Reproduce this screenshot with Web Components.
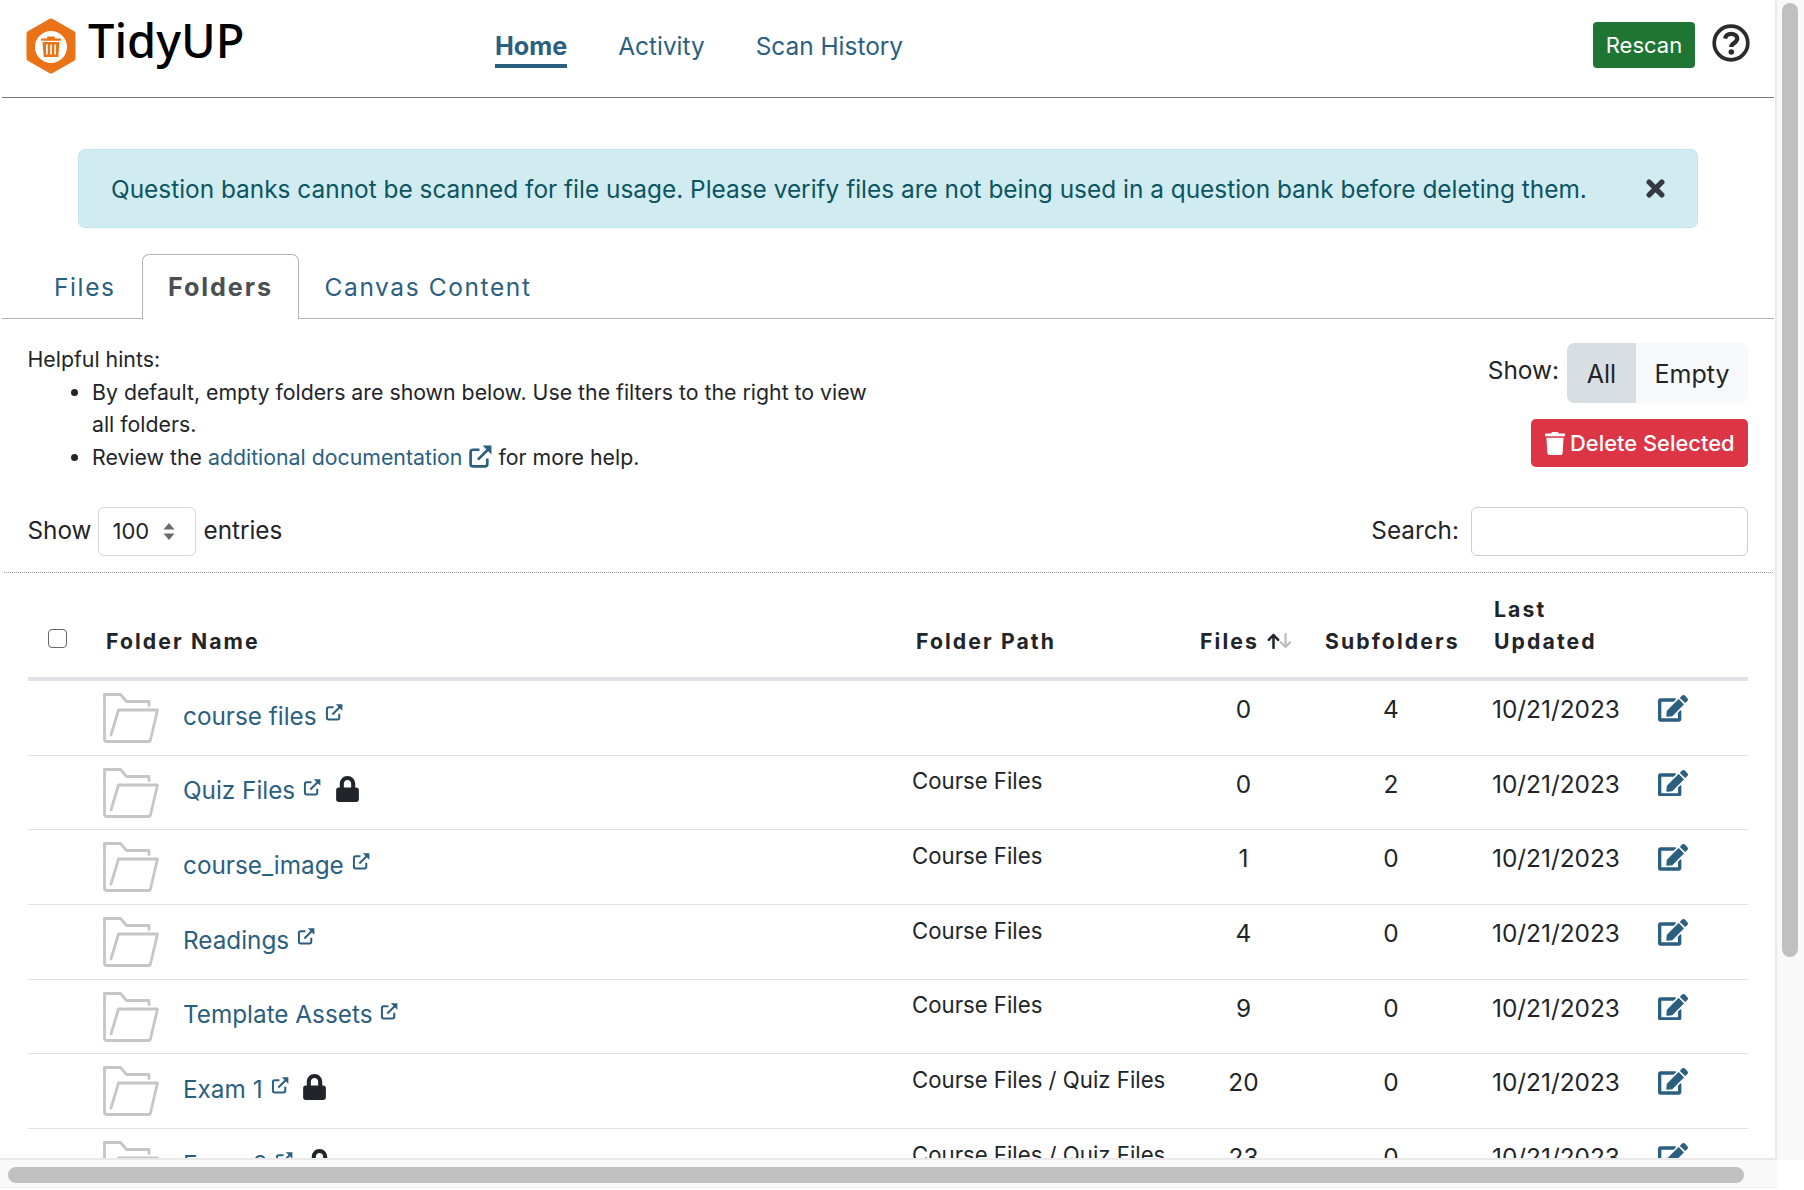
<!DOCTYPE html>
<html lang="en"><head><meta charset="utf-8"><title>TidyUP</title>
<style>
html,body{margin:0;padding:0;background:#fff;overflow:hidden;width:1804px;height:1190px}
body{font-family:Inter,"Liberation Sans",sans-serif;color:#212529}
</style></head><body>
<tu-app>
  <tu-navbar></tu-navbar>
  <tu-alert>Question banks cannot be scanned for file usage. Please verify files are not being used in a question bank before deleting them.</tu-alert>
  <tu-tabs></tu-tabs>
  <tu-toolbar></tu-toolbar>
  <tu-controls></tu-controls>
  <tu-thead></tu-thead>
  <tu-row files="0" subs="4">course files</tu-row>
  <tu-row path="Course Files" files="0" subs="2" locked>Quiz Files</tu-row>
  <tu-row path="Course Files" files="1" subs="0">course_image</tu-row>
  <tu-row path="Course Files" files="4" subs="0">Readings</tu-row>
  <tu-row path="Course Files" files="9" subs="0">Template Assets</tu-row>
  <tu-row path="Course Files / Quiz Files" files="20" subs="0" locked>Exam 1</tu-row>
  <tu-row path="Course Files / Quiz Files" files="23" subs="0" locked>Exam 2</tu-row>
</tu-app>
<script>
const ICONS={
 ext:'<svg viewBox="0 0 24 24" width="100%" height="100%" fill="none" stroke="currentColor" stroke-width="2.6"><path d="M18.500 14v5.200a2.300 2.300 0 0 1-2.300 2.300H4.800a2.300 2.300 0 0 1-2.300-2.300V7.800a2.300 2.300 0 0 1 2.300-2.300H11"/><path d="M9.500 15 L20 4.500"/><path d="M14 1.500h8.500v8.500z" fill="currentColor" stroke="none"/></svg>',
 edit:'<svg viewBox="0 0 576 512" width="100%" height="100%" fill="currentColor"><path d="M402.600 83.200l90.200 90.200c3.800 3.800 3.800 10 0 13.800L274.400 405.600l-92.800 10.300c-12.400 1.400-22.900-9.100-21.500-21.500l10.300-92.800L388.800 83.200c3.800-3.800 10-3.800 13.800 0zm162-22.900l-48.800-48.800c-15.200-15.200-39.900-15.200-55.200 0l-35.400 35.400c-3.800 3.800-3.800 10 0 13.800l90.200 90.200c3.800 3.800 10 3.800 13.800 0l35.400-35.400c15.200-15.300 15.200-40 0-55.200zM384 346.200V448H64V128h229.800c3.200 0 6.200-1.300 8.500-3.500l40-40c7.600-7.600 2.200-20.500-8.500-20.500H48C21.500 64 0 85.500 0 112v352c0 26.500 21.500 48 48 48h352c26.500 0 48-21.500 48-48V306.200c0-10.700-12.900-16-20.500-8.500l-40 40c-2.200 2.300-3.500 5.300-3.500 8.500z"/></svg>',
 lock:'<svg viewBox="0 0 448 512" width="100%" height="100%" fill="currentColor"><path d="M400 224h-24v-72C376 68.200 307.800 0 224 0S72 68.200 72 152v72H48c-26.500 0-48 21.500-48 48v192c0 26.500 21.500 48 48 48h352c26.500 0 48-21.500 48-48V272c0-26.500-21.500-48-48-48zm-104 0H152v-72c0-39.700 32.300-72 72-72s72 32.300 72 72v72z"/></svg>',
 trash:'<svg viewBox="0 0 448 512" width="100%" height="100%" fill="currentColor"><path d="M432 32H312l-9.400-18.700A24 24 0 0 0 281.100 0H166.800a23.720 23.720 0 0 0-21.400 13.300L136 32H16A16 16 0 0 0 0 48v32a16 16 0 0 0 16 16h416a16 16 0 0 0 16-16V48a16 16 0 0 0-16-16zM53.200 467a48 48 0 0 0 47.900 45h245.800a48 48 0 0 0 47.900-45L416 128H32z"/></svg>',
 folder:'<svg viewBox="0 0 56 50" width="56" height="50" fill="none" stroke="#c6c6c6" stroke-width="2.800" stroke-linejoin="round" stroke-linecap="round"><path d="M46 12.500V8.500H23.500L17.500 1.500H1.500V46a2.500 2.500 0 0 0 2.500 2.500H45.500a2 2 0 0 0 2-1.700L54.500 17H15.500L8 42"/></svg>',
 help:'<svg viewBox="0 0 38 38" width="38" height="38" fill="none" stroke="#2b2b2b"><circle cx="19" cy="19" r="16.800" stroke-width="3.700"/><path d="M13 14.600c.6-3.200 3-4.800 6.200-4.800 3.400 0 6 2 6 4.800 0 2.200-1.300 3.300-3.100 4.500-1.900 1.200-2.800 2-2.800 3.900" stroke-width="4.300"/><circle cx="19.300" cy="28" r="2.800" fill="#2b2b2b" stroke="none"/></svg>',
 sort:'<svg viewBox="0 0 25 16" width="25" height="16" fill="none" stroke-linecap="round" stroke-linejoin="round"><path d="M6.500 15V2M1.800 6.800L6.500 2l4.700 4.800" stroke="#212529" stroke-width="2.500"/><path d="M18.500 1v13M13.800 9.200l4.700 4.800 4.700-4.800" stroke="#bdbdbd" stroke-width="2.200"/></svg>',
 logo:'<svg viewBox="0 0 50 56" width="50" height="56"><path d="M25 3 L47 15.500 V40.500 L25 53 L3 40.500 V15.500 Z" fill="#ea7317" stroke="#ea7317" stroke-width="5" stroke-linejoin="round"/><circle cx="25" cy="29" r="16" fill="#fff"/><g fill="#ea7317"><rect x="15" y="20.500" width="20" height="2.200" rx=".8"/><rect x="21" y="18.500" width="8" height="2.500" rx="1"/><path d="M16.500 24h17l-1.200 15H17.700zM20 26.500v10h1.700v-10zm4.200 0v10h1.700v-10zm4.100 0v10H30v-10z" fill-rule="evenodd"/></g></svg>'
};
function def(name,css,html){
  customElements.define(name,class extends HTMLElement{
    constructor(){super();this.attachShadow({mode:'open'});}
    connectedCallback(){
      this.shadowRoot.innerHTML='<style>svg{display:block}'+css+'</style>'+(typeof html==='function'?html(this):html);
    }
  });
}
def('tu-app',`
:host{display:grid;grid-template-columns:1777px 27px;grid-template-rows:1160px 28px 2px;width:1804px;height:1190px}
.view{overflow:hidden;border-right:2px solid #e9e9e9;border-bottom:2px solid #e9e9e9;box-sizing:border-box;padding-left:1px;min-width:0}
.vbar{background:#f9f9f9;padding:3px 6px 0 5px}
.vbar i{display:block;height:954px;background:#c0c0c0;border-radius:8px}
.hbar{grid-column:1 / 2;background:#f9f9f9;padding:7px 0 0 8px;border-bottom:1px solid #eee;box-sizing:border-box}
.hbar i{display:block;width:1736px;height:16px;background:#c0c0c0;border-radius:8px}
`,`<div class="view"><slot></slot></div><div class="vbar"><i></i></div><div class="hbar"><i></i></div>`);
def('tu-navbar',`
:host{display:flex;align-items:flex-start;height:97px;border-bottom:1px solid #777;width:1772px;margin-left:1px}
.brand{display:flex;margin:18px 0 0 24px;width:469px;flex:none}
.name{font:500 47px/1 "Noto Sans",sans-serif;color:#000;margin:-1px 0 0 12px}
nav{display:flex;gap:51px;margin-top:28px;flex:1}
a{font-size:24.400px;line-height:36px;color:#2b5f80;text-decoration:none;display:block;height:40px;box-sizing:border-box}
a.on{font-size:25.200px;font-weight:700;border-bottom:4px solid #2b5f80}
.btn{background:#1e7534;color:#fff;width:102px;height:46px;border-radius:4px;font-size:22px;line-height:46px;text-align:center;margin-top:22px;flex:none}
.help{margin:24px 24px 0 17px;flex:none;height:38px}
`,`<div class="brand">${ICONS.logo}<div class="name">TidyUP</div></div>
<nav><a class="on">Home</a><a>Activity</a><a>Scan History</a></nav>
<div class="btn">Rescan</div><div class="help">${ICONS.help}</div>`);
def('tu-alert',`
:host{display:flex;align-items:center;justify-content:space-between;box-sizing:border-box;margin:51px 0 0 77px;width:1620px;height:79px;background:#d1ecf1;border:1px solid #bee5eb;border-radius:7px;color:#0c5460;font-size:24.400px;padding:0 32px 0 32px}
svg{width:19px;height:19px}
`,`<slot></slot><svg viewBox="0 0 18 18" stroke="#343a40" stroke-width="5" stroke-linecap="round"><path d="M3 3l12 12M15 3L3 15"/></svg>`);
def('tu-tabs',`
:host{display:flex;box-sizing:border-box;width:1772px;margin-left:1px;height:65px;margin-top:26px;border-bottom:1px solid #b4b4b4;padding-left:26px;font-size:24.500px;letter-spacing:1.600px;color:#2b5f80}
span{display:block;padding:16px 26px 0;height:64px;box-sizing:border-box;line-height:34px}
.on{font-size:25.200px;letter-spacing:1.900px;font-weight:700;color:#4a4f54;border:1px solid #b4b4b4;border-bottom:0;background:#fff;height:65px;border-radius:7px 7px 0 0;padding:15px 0 0 25.500px;width:157px}
`,`<span>Files</span><span class="on">Folders</span><span>Canvas Content</span>`);
def('tu-toolbar',`
:host{display:flex;justify-content:space-between;width:1747px;box-sizing:border-box;padding:24px 0 0 26.500px;font-size:21.300px;line-height:32.500px}
.hints{width:850px}
ul{margin:0;padding:0 0 0 64.500px}
a{color:#2b5f80;text-decoration:none}
.e{display:inline-block;width:25px;height:25px;color:#2b5f80;vertical-align:-4px;margin:0 5px 0 6px}
.r{display:flex;flex-direction:column;align-items:flex-end}
.f{display:flex;align-items:flex-start;height:60px;margin-bottom:16px;font-size:25px}
.l{line-height:54px;margin-right:8px;font-size:24.400px}
.g{display:flex;height:60px;line-height:62px;border-radius:7px;overflow:hidden;font-size:25px}
.g b{font-weight:400;display:block;text-align:center}
.a{width:69px;background:#d9dee3}.m{width:112px;background:#f8f9fa}
.d{display:flex;align-items:center;width:217px;height:48px;box-sizing:border-box;padding-left:14px;background:#dc3545;color:#fff;border-radius:5px;font-size:21.900px;font-weight:500;line-height:48px}
.d span{display:block;width:20px;height:23px;margin-right:5px}
`,`<div class="hints">Helpful hints:<ul><li>By default, empty folders are shown below. Use the filters to the right to view all folders.</li><li>Review the <a>additional documentation</a><span class="e">${ICONS.ext}</span>for more help.</li></ul></div>
<div class="r"><div class="f"><span class="l">Show:</span><div class="g"><b class="a">All</b><b class="m">Empty</b></div></div>
<div class="d"><span>${ICONS.trash}</span>Delete Selected</div></div>`);
def('tu-controls',`
:host{display:block;width:1773px;box-sizing:border-box;margin-top:34px}
.row{display:flex;justify-content:space-between;padding:0 26px 0 26.500px;height:49px;font-size:24.300px;line-height:47px}
.s,.q{display:flex}
.sel{display:flex;align-items:center;box-sizing:border-box;width:98px;height:49px;margin:0 7px;border:1px solid #d6d6d6;border-radius:6px;padding-left:13px;font-size:22px}
.sel svg{margin-left:14px}
.in{box-sizing:border-box;width:277px;height:49px;border:1px solid #cfcfcf;border-radius:6px;margin-left:12px}
.dot{border-top:1px dotted #9a9a9a;margin:16px 1px 0 3px}
`,`<div class="row"><div class="s">Show<div class="sel">100<svg width="12" height="17" viewBox="0 0 12 17" fill="#6a6a6a"><path d="M6 0l5.500 6.500H.5zM6 17L.5 10.500h11z"/></svg></div>entries</div><div class="q">Search:<div class="in"></div></div></div><div class="dot"></div>`);
const COLS='67px 810px 288px 125px 146px 176px 108px';
def('tu-thead',`
:host{display:grid;grid-template-columns:${COLS};width:1720px;margin-left:27px;height:108px;box-sizing:border-box;border-bottom:4px solid #dee2e6;font-weight:700;font-size:21.200px;letter-spacing:2.100px;line-height:32px;align-items:end;padding-bottom:20px}
.n{padding-left:11px}.p{padding-left:11px}.f{padding-left:7px;display:flex;align-items:center}.s{padding-left:7px}.d{padding-left:30px}
.f svg{margin-left:8px}
.c{box-sizing:border-box;width:19px;height:19px;border:1px solid #666;border-radius:4px;background:#fff;margin:0 0 9px 20px}
`,`<div><div class="c"></div></div><div class="n">Folder Name</div><div class="p">Folder Path</div><div class="f">Files${ICONS.sort}</div><div class="s">Subfolders</div><div class="d">Last<br>Updated</div><div></div>`);
def('tu-row',`
:host{display:grid;grid-template-columns:${COLS};width:1720px;margin-left:27px;height:74.700px;box-sizing:border-box;border-bottom:1px solid #dee2e6;font-size:24.400px;overflow:hidden}
.name{display:flex;align-items:flex-start;padding:12px 0 0 8px;color:#2b5f80}
.name svg{flex:none}
.t{display:block;margin:5.500px 0 0 24px;line-height:34px;font-size:24.300px}
.x{display:block;width:18.500px;height:18.500px;margin:10px 0 0 8px}
.l{display:block;width:23px;height:26px;color:#212529;margin:8px 0 0 14px}
.p{font-size:22.200px;line-height:32px;padding:9.500px 0 0 7px}
.num{text-align:center;line-height:36px;padding-top:10px}
.fc{padding-right:24px}
.dt{padding:10px 0 0 28px;line-height:36px}
.e{padding:14px 0 0 18px;color:#2b5f80}
.e div{width:30px;height:26.700px}
`,el=>{const g=a=>el.getAttribute(a)||'';return `<div></div><div class="name">${ICONS.folder}<span class="t"><slot></slot></span><span class="x">${ICONS.ext}</span>${el.hasAttribute('locked')?`<span class="l">${ICONS.lock}</span>`:''}</div><div class="p">${g('path')}</div><div class="num fc">${g('files')}</div><div class="num">${g('subs')}</div><div class="dt">10/21/2023</div><div class="e"><div>${ICONS.edit}</div></div>`;});
</script>
</body></html>
